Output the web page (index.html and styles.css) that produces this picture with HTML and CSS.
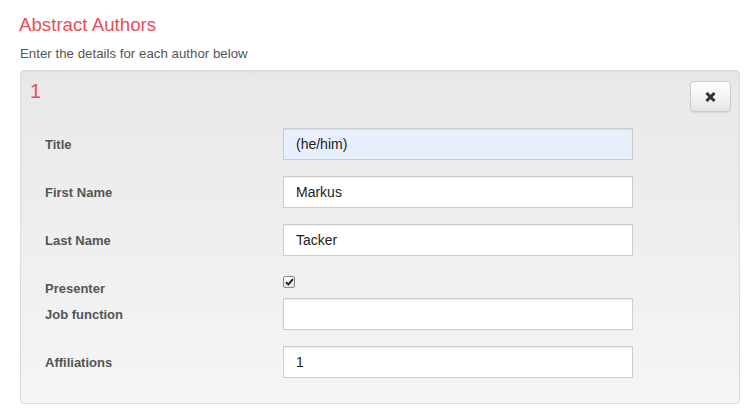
FILE: index.html
```html
<!DOCTYPE html>
<html>
<head>
<meta charset="utf-8">
<link rel="stylesheet" href="styles.css">
</head>
<body>
<div class="page">
  <h2 class="heading">Abstract Authors</h2>
  <p class="intro">Enter the details for each author below</p>
  <div class="well">
    <div class="well-top">
      <span class="num">1</span>
      <button class="btn-close" type="button" aria-label="Remove">
        <svg width="11" height="10" viewBox="0 0 11 10"><path d="M1.5 1 L9.5 9 M9.5 1 L1.5 9" stroke="#333" stroke-width="3" stroke-linecap="butt"/></svg>
      </button>
    </div>
    <div class="form">
      <div class="row"><label class="lbl">Title</label><input class="ctl autofill" value="(he/him)"></div>
      <div class="row"><label class="lbl">First Name</label><input class="ctl" value="Markus"></div>
      <div class="row"><label class="lbl">Last Name</label><input class="ctl" value="Tacker"></div>
      <div class="row row-check"><label class="lbl lbl-check">Presenter</label><span class="check"><svg width="9" height="8" viewBox="0 0 9 8"><path d="M1 4.2 L3.4 6.4 L8 1.2" fill="none" stroke="#222" stroke-width="1.9"/></svg></span></div>
      <div class="row"><label class="lbl">Job function</label><input class="ctl" value=""></div>
      <div class="row last"><label class="lbl">Affiliations</label><input class="ctl" value="1"></div>
    </div>
  </div>
</div>
</body>
</html>
```
FILE: styles.css
```css
* { box-sizing: border-box; }
html, body { margin: 0; padding: 0; background: #fff; }
body { font-family: "Liberation Sans", Arial, sans-serif; color: #333; }
.page { padding: 12px 6px 0 20px; }
.heading {
  margin: 0 0 0 -1px;
  font-size: 18.7px;
  font-weight: normal;
  line-height: 26px;
  color: #ec4d55;
}
.intro {
  margin: 7px 0 0 0;
  font-size: 13.3px;
  line-height: 18px;
  color: #555;
}
.well {
  margin-top: 7px;
  border: 1px solid #dcdcdc;
  border-radius: 4px;
  background: linear-gradient(to bottom, #e8e8e8 0, #f5f5f5 100%);
  box-shadow: inset 0 1px 3px rgba(0,0,0,.05), 0 1px 0 rgba(255,255,255,.1);
  padding: 9px 8px 25px 8px;
}
.well-top {
  display: flex;
  justify-content: space-between;
  align-items: flex-start;
}
.num {
  font-size: 20px;
  line-height: 22px;
  color: #ec4d55;
  margin-left: 1px;
}
.btn-close {
  width: 41px;
  height: 31px;
  border: 1px solid #ccc;
  border-radius: 4px;
  background: linear-gradient(to bottom, #fff 0, #e6e6e6 100%);
  box-shadow: inset 0 1px 0 rgba(255,255,255,.15), 0 1px 1px rgba(0,0,0,.075);
  display: flex;
  align-items: center;
  justify-content: center;
  padding: 0;
  margin: 1px 0 0 0;
}
.form { margin-top: 16px; padding-left: 16px; }
.row {
  display: grid;
  grid-template-columns: 238px 350px;
  align-items: center;
  margin-bottom: 16px;
}
.row.last { margin-bottom: 0; }
.lbl {
  font-size: 13px;
  font-weight: bold;
  color: #555;
  line-height: 18px;
  padding-top: 2px;
}
.ctl {
  height: 32px;
  width: 350px;
  border: 1px solid #ccc;
  border-radius: 0;
  background: #fff;
  box-shadow: inset 0 1px 1px rgba(0,0,0,.075);
  padding: 0 12px;
  font-family: "Liberation Sans", Arial, sans-serif;
  font-size: 14px;
  color: #222;
  outline: none;
}
.ctl.autofill { background: #e8f0fe; }
.row-check {
  align-items: start;
  height: 26px;
  margin-bottom: 0;
}
.lbl-check { padding-top: 8px; }
.check {
  margin-top: 4px;
  width: 12px;
  height: 12px;
  border: 1px solid #8a8a8a;
  border-radius: 2px;
  background: linear-gradient(#fdfdfd, #e4e4e4);
  display: flex;
  align-items: center;
  justify-content: center;
}
```
